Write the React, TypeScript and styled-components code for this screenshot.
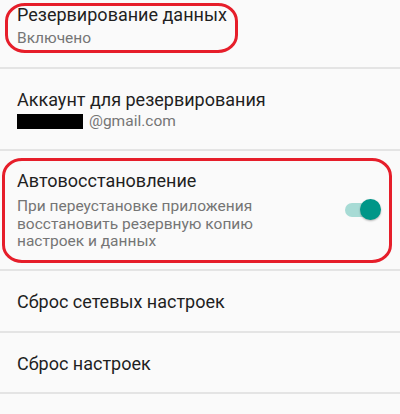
import styled, { createGlobalStyle } from 'styled-components';

const GlobalStyle = createGlobalStyle`
  html, body {
    margin: 0;
    padding: 0;
    background-color: #fafafa;
    font-family: Roboto, "Noto Sans", "Liberation Sans", sans-serif;
    overflow: hidden;
  }
`;

const Screen = styled.div`
  width: 400px;
  height: 414px;
  overflow: hidden;
  background-color: #fafafa;
`;

// список прокручен: первая строка частично уходит за верхний край
const List = styled.div`
  display: flex;
  flex-direction: column;
  margin-top: -16px;
`;

const Row = styled.div<{ $pad: string }>`
  position: relative;
  display: flex;
  align-items: center;
  gap: 12px;
  padding: ${(p) => p.$pad};
  border-bottom: 2px solid #e4e4e4;
  box-sizing: border-box;
`;

const Texts = styled.div`
  flex: 1;
  display: flex;
  flex-direction: column;
`;

const Title = styled.div`
  font-size: 18px;
  line-height: 22px;
  color: #1f1f1f;
`;

const Summary = styled.div<{ $gap?: number }>`
  margin-top: ${(p) => p.$gap ?? 0}px;
  font-size: 15.5px;
  line-height: 17.5px;
  color: #757575;
  display: flex;
  align-items: center;
`;

const Redacted = styled.span`
  display: inline-block;
  width: 66px;
  height: 15px;
  background-color: #000;
  margin-right: 6px;
`;

const Mark = styled.div<{ $top: number; $left: number; $w: number; $h: number }>`
  position: absolute;
  top: ${(p) => p.$top}px;
  left: ${(p) => p.$left}px;
  width: ${(p) => p.$w}px;
  height: ${(p) => p.$h}px;
  border: 3px solid #e61e2a;
  border-radius: 20px / 18px;
  box-sizing: border-box;
  pointer-events: none;
`;

const Switch = styled.div`
  position: relative;
  width: 36px;
  height: 22px;
  margin-right: 19px;
  flex-shrink: 0;
`;

const Track = styled.div`
  position: absolute;
  left: 0;
  top: 4px;
  width: 33px;
  height: 14px;
  border-radius: 7px;
  background-color: #a7dbd5;
`;

const Thumb = styled.div`
  position: absolute;
  right: 0;
  top: 0;
  width: 21px;
  height: 21px;
  border-radius: 50%;
  background-color: #009688;
  box-shadow: 0 1px 2px rgba(0, 0, 0, 0.3);
`;

export default function App() {
  return (
    <Screen>
      <GlobalStyle />
      <List>
        <Row $pad="20px 17px 19px">
          <Mark $top={19} $left={5} $w={233} $h={50} />
          <Texts>
            <Title>Резервирование данных</Title>
            <Summary $gap={4}>Включено</Summary>
          </Texts>
        </Row>
        <Row $pad="20px 17px 19px">
          <Texts>
            <Title>Аккаунт для резервирования</Title>
            <Summary $gap={2}>
              <Redacted />
              @gmail.com
            </Summary>
          </Texts>
        </Row>
        <Row $pad="19px 0 18px 17px">
          <Mark $top={7} $left={2} $w={390} $h={105} />
          <Texts>
            <Title>Автовосстановление</Title>
            <Summary $gap={6}>
              При переустановке приложения
              <br />
              восстановить резервную копию
              <br />
              настроек и данных
            </Summary>
          </Texts>
          <Switch>
            <Track />
            <Thumb />
          </Switch>
        </Row>
        <Row $pad="20px 17px 18px">
          <Texts>
            <Title>Сброс сетевых настроек</Title>
          </Texts>
        </Row>
        <Row $pad="20px 17px 17px">
          <Texts>
            <Title>Сброс настроек</Title>
          </Texts>
        </Row>
      </List>
    </Screen>
  );
}
